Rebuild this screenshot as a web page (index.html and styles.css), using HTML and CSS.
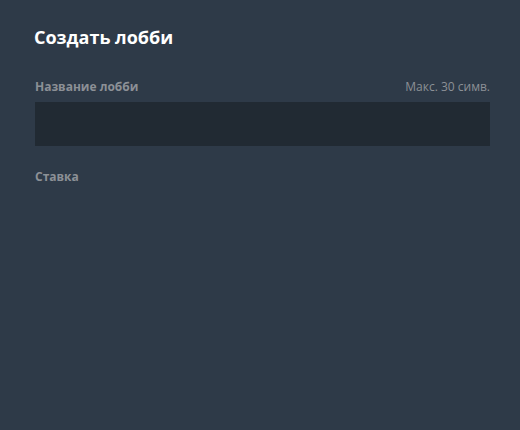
FILE: index.html
```html
<!DOCTYPE html>
<html lang="ru">
<head>
<meta charset="utf-8">
<link rel="stylesheet" href="styles.css">
</head>
<body>
<div class="dialog">
  <h1 class="title">Создать лобби</h1>
  <div class="field field-name">
    <div class="field-head">
      <span class="label">Название лобби</span>
      <span class="hint">Макс. 30 симв.</span>
    </div>
    <div class="input"></div>
  </div>
  <div class="field field-bet">
    <div class="field-head">
      <span class="label">Ставка</span>
    </div>
  </div>
</div>
</body>
</html>
```
FILE: styles.css
```css
html, body {
  margin: 0;
  padding: 0;
  background: #2e3a48;
  height: 100%;
}
body {
  font-family: "Open Sans", "Noto Sans", sans-serif;
}
.dialog {
  padding: 24px 30px 0 35px;
}
.title {
  margin: 0 0 0 -1px;
  font-size: 18px;
  font-weight: 700;
  line-height: 26px;
  color: #ffffff;
}
.field-name {
  margin-top: 29px;
}
.field-bet {
  margin-top: 23px;
}
.field-head {
  display: flex;
  justify-content: space-between;
  align-items: baseline;
  font-size: 12px;
  line-height: 16px;
}
.label {
  font-weight: 700;
  color: #8c9096;
}
.hint {
  color: #8c9096;
}
.input {
  margin-top: 7px;
  height: 44px;
  background: #212a33;
}
```
